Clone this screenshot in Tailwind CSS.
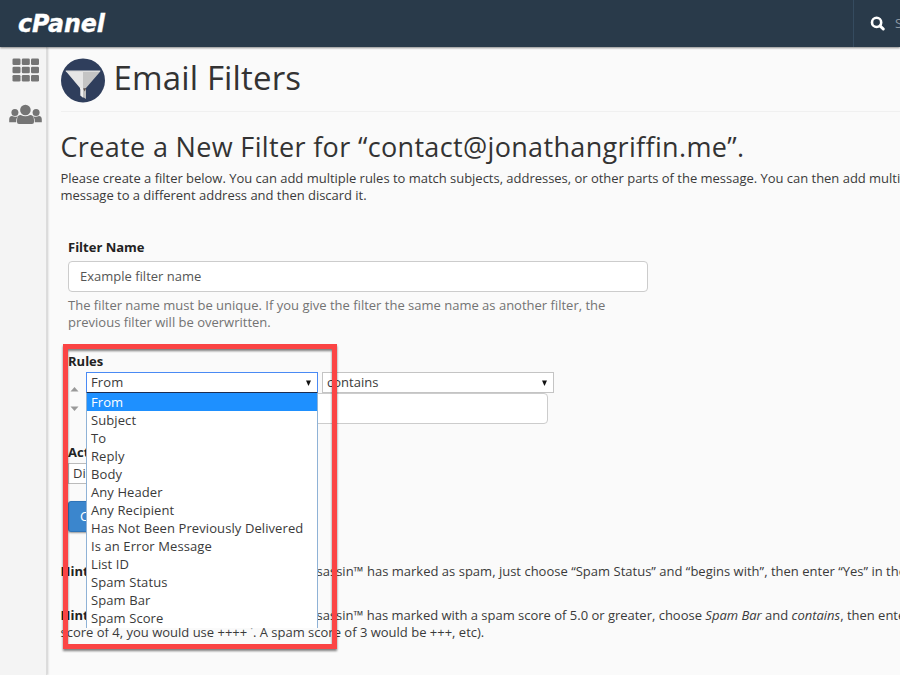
<!DOCTYPE html>
<html lang="en">
<head>
<meta charset="utf-8">
<title>Email Filters</title>
<script src="https://cdn.jsdelivr.net/npm/@tailwindcss/browser@4"></script>
</head>
<body class="w-[900px] h-[675px] overflow-hidden bg-[#fafafa] font-['Open_Sans',sans-serif] text-[13px] leading-[17px] text-[#3a3a3a]">
<div class="relative w-[900px] h-[675px] overflow-hidden flex flex-col">
  <header class="h-[47px] shrink-0 bg-[#293a4a] flex justify-between shadow-[0_1px_2px_rgba(0,0,0,0.45)] z-10">
    <svg class="ml-[17px] mt-[10px]" width="92" height="28" viewBox="0 0 92 28" role="img" aria-label="cPanel">
      <text x="1" y="22" fill="#fff" stroke="#fff" stroke-width="0.4" font-family="DejaVu Sans" font-weight="bold" font-style="italic" font-size="24" textLength="87" lengthAdjust="spacingAndGlyphs">cPanel</text>
    </svg>
    <div class="w-[47px] border-l border-[#354b5f] flex items-center pl-[16px] overflow-hidden">
      <svg class="shrink-0" width="16" height="16" viewBox="0 0 16 16"><circle cx="6.6" cy="6.4" r="4.6" fill="none" stroke="#fff" stroke-width="2.6"/><path d="M10 9.8L13.3 13" stroke="#fff" stroke-width="3" stroke-linecap="round"/></svg>
      <span class="ml-[9px] text-[#8e99a3] whitespace-nowrap">Search</span>
    </div>
  </header>
  <div class="flex flex-1 min-h-0">
    <nav class="w-[47px] shrink-0 bg-[#f4f4f4] border-r border-[#dcdcdc] shadow-[1px_0_2px_rgba(0,0,0,0.18)] flex flex-col">
      <svg class="ml-[12px] mt-[11px] shrink-0" width="28" height="24" viewBox="0 0 28 24" fill="#757575">
        <rect x="0.5" y="0.4" width="8" height="6.6" rx="1.3"/><rect x="9.8" y="0.4" width="8" height="6.6" rx="1.3"/><rect x="19" y="0.4" width="8" height="6.6" rx="1.3"/>
        <rect x="0.5" y="8.7" width="8" height="6.6" rx="1.3"/><rect x="9.8" y="8.7" width="8" height="6.6" rx="1.3"/><rect x="19" y="8.7" width="8" height="6.6" rx="1.3"/>
        <rect x="0.5" y="17" width="8" height="6.6" rx="1.3"/><rect x="9.8" y="17" width="8" height="6.6" rx="1.3"/><rect x="19" y="17" width="8" height="6.6" rx="1.3"/>
      </svg>
      <svg class="ml-[9px] mt-[22px] shrink-0" width="33" height="21" viewBox="0 0 33 21" fill="#757575">
        <circle cx="5.9" cy="8.6" r="3.5"/><circle cx="27.1" cy="8.6" r="3.5"/>
        <path d="M0.2 18.2V15.5Q0.2 12 3 12Q5.8 13.5 8.8 12.3Q7.2 14 7.2 18.2Z"/><path d="M32.8 18.2V15.5Q32.8 12 30 12Q27.2 13.5 24.2 12.3Q25.8 14 25.8 18.2Z"/>
        <circle cx="16.4" cy="6" r="5.3"/>
        <path d="M8 18V16.2Q8 10.9 11.7 10.9Q16.4 13.8 21.1 10.9Q25 10.9 25 16.2V18Q25 20 23 20H10Q8 20 8 18Z"/>
      </svg>
    </nav>
    <main class="relative flex-1 min-w-0 pl-[13.5px] pt-[11px]">
      <div class="flex h-[54px] border-b border-[#f0f0f0]">
        <svg class="shrink-0" width="44" height="45" viewBox="0 0 44 45"><circle cx="22" cy="22.4" r="22" fill="#2f3e5c"/><path d="M4.5 13H22V32L19 31V30L6.2 14.8Z" fill="#e6e6e6"/><path d="M22 13H39.5L38 15L25 30V32H22Z" fill="#c4c4c4"/><path d="M4.5 12.6H39.5L38.6 14H5.6Z" fill="#ddd"/><path d="M19.3 30H22.3V40L19.3 37.5Z" fill="#eee"/><path d="M22 30H25V41L22 39Z" fill="#bdbdbd"/><path d="M22 30.5L25.2 30L23.8 33.5Z" fill="#5b5050"/></svg>
        <h1 class="ml-[9px] text-[33px] leading-[39px] tracking-[0.16px] whitespace-nowrap text-[#333]">Email Filters</h1>
      </div>
      <h2 class="mt-[17px] text-[27px] leading-[36px] tracking-[0.34px] whitespace-nowrap text-[#333]">Create a New Filter for “contact@jonathangriffin.me”.</h2>
      <p class="mt-[5px] whitespace-nowrap tracking-[-0.02px] leading-[16.5px]">Please create a filter below. You can add multiple rules to match subjects, addresses, or other parts of the message. You can then add multiple<br>message to a different address and then discard it.</p>
      <div class="pl-[7.5px] mt-[36px]">
        <div class="font-bold text-[#222]">Filter Name</div>
        <div class="mt-[5px] w-[580px] h-[31px] border border-[#ccc] rounded-[4px] bg-white flex items-center pl-[11px] text-[#555]">Example filter name</div>
        <p class="mt-[5px] text-[#737373] whitespace-nowrap leading-[16.5px]">The filter name must be unique. If you give the filter the same name as another filter, the<br>previous filter will be overwritten.</p>
        <div class="mt-[23px] font-bold text-[#222]">Rules</div>
        <div class="flex mt-[2px]">
          <svg class="shrink-0 mt-[15px]" width="18" height="26" viewBox="0 0 18 26" fill="#999"><path d="M2.5 4.5L6.5 0L10.5 4.5Z"/><path d="M2.5 19.5H10.5L6.5 24Z"/></svg>
          <div>
            <div class="flex gap-[4px]">
              <div class="w-[232px] h-[21px] border border-[#4a8af4] bg-white flex items-center justify-between pl-[4px] pr-[4px] tracking-[0.1px]"><span>From</span><svg width="9" height="8" viewBox="0 0 9 8"><path d="M2 1.5H7L4.5 7Z" fill="#111"/></svg></div>
              <div class="w-[232px] h-[21px] border border-[#c4c4c4] bg-white flex items-center justify-between pl-[4px] pr-[4px]"><span>contains</span><svg width="9" height="8" viewBox="0 0 9 8"><path d="M2 1.5H7L4.5 7Z" fill="#111"/></svg></div>
            </div>
            <div class="w-[462px] h-[31px] border border-[#ccc] rounded-[4px] bg-white"></div>
          </div>
        </div>
        <div class="mt-[20px] font-bold text-[#222]">Actions</div>
        <div class="mt-[2px] w-[160px] h-[21px] border border-[#bbb] bg-white flex items-center pl-[4px]">Discard Message</div>
        <div class="mt-[17px] w-[80px] h-[31px] rounded-[3px] bg-[#3b86cd] border border-[#2f74b8] shadow-[0_1px_2px_rgba(0,0,0,0.4)] text-white flex items-center pl-[11px]">Create</div>
      </div>
      <p class="mt-[31px] h-[17px] flex whitespace-nowrap"><b class="w-[256px] shrink-0 text-[#222]">Hint:</b><span class="tracking-[0.01px]">sassin™ has marked as spam, just choose “Spam Status” and “begins with”, then enter “Yes” in the box.</span></p>
      <p class="mt-[27px] h-[16.5px] flex whitespace-nowrap"><b class="w-[256px] shrink-0 text-[#222]">Hint:</b><span class="tracking-[-0.01px]">sassin™ has marked with a spam score of 5.0 or greater, choose <i>Spam Bar</i> and <i>contains</i>, then enter</span></p>
      <p class="whitespace-nowrap">score of 4, you would use ++++ <span class="text-[#999]">˙</span>. A spam score of 3 would be +++, etc).</p>
    </main>
  </div>
  <ul class="absolute left-[86px] top-[392px] z-20 w-[232px] h-[236px] bg-white border-x border-[#8fb2d6] border-t border-t-[#1c2c50] leading-[18.03px] tracking-[0.09px] whitespace-nowrap overflow-hidden">
    <li class="bg-[#1e90ff] text-white pl-[4px]">From</li><li class="pl-[4px]">Subject</li><li class="pl-[4px]">To</li><li class="pl-[4px]">Reply</li><li class="pl-[4px]">Body</li><li class="pl-[4px]">Any Header</li><li class="pl-[4px]">Any Recipient</li><li class="pl-[4px]">Has Not Been Previously Delivered</li><li class="pl-[4px]">Is an Error Message</li><li class="pl-[4px]">List ID</li><li class="pl-[4px]">Spam Status</li><li class="pl-[4px]">Spam Bar</li><li class="pl-[4px]">Spam Score</li>
  </ul>
  <div class="absolute left-[63px] top-[344px] z-30 w-[274px] h-[305px] border-[5px] border-[#fb4444] drop-shadow-[0_2px_1px_rgba(0,0,0,0.5)]"></div>
</div>
</body>
</html>
